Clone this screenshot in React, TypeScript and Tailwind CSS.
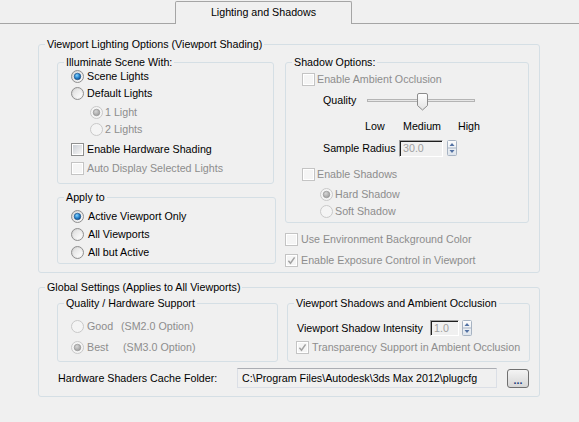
import type { ReactNode } from 'react';
import clsx from 'clsx';

const dim = 'text-[#8d8d8d]';

function Defs() {
  return (
    <svg width="0" height="0" className="absolute">
      <defs>
        <linearGradient id="rb-face" x1="0" y1="0" x2="1" y2="1">
          <stop offset="0" stopColor="#cfcfcf" />
          <stop offset="1" stopColor="#fbfbfb" />
        </linearGradient>
        <linearGradient id="rb-well" x1="0" y1="0" x2="1" y2="1">
          <stop offset="0" stopColor="#dedede" />
          <stop offset="1" stopColor="#ffffff" />
        </linearGradient>
        <radialGradient id="rb-dot" cx="0.4" cy="0.35" r="0.7">
          <stop offset="0" stopColor="#8ad6ff" />
          <stop offset="0.5" stopColor="#2d8ad2" />
          <stop offset="1" stopColor="#0d4682" />
        </radialGradient>
        <radialGradient id="rb-dot-off" cx="0.4" cy="0.35" r="0.7">
          <stop offset="0" stopColor="#d6d6d6" />
          <stop offset="1" stopColor="#999999" />
        </radialGradient>
        <linearGradient id="cb-well" x1="0" y1="0" x2="1" y2="1">
          <stop offset="0" stopColor="#cbcfd5" />
          <stop offset="1" stopColor="#f7f7f7" />
        </linearGradient>
        <linearGradient id="spin" x1="0" y1="0" x2="0" y2="1">
          <stop offset="0" stopColor="#fdfdfd" />
          <stop offset="1" stopColor="#dde4ec" />
        </linearGradient>
        <linearGradient id="thumb" x1="0" y1="0" x2="0" y2="1">
          <stop offset="0" stopColor="#ffffff" />
          <stop offset="1" stopColor="#e2e2e2" />
        </linearGradient>
      </defs>
    </svg>
  );
}

function Radio({ checked = false, disabled = false }: { checked?: boolean; disabled?: boolean }) {
  return (
    <svg width="13" height="13" viewBox="0 0 13 13" className="shrink-0">
      <circle cx="6.5" cy="6.5" r="6" fill={disabled ? '#f4f4f4' : 'url(#rb-face)'} stroke={disabled ? '#c8c8c8' : '#8f8f8f'} />
      {!disabled && <circle cx="6.5" cy="6.5" r="4.4" fill="url(#rb-well)" />}
      {checked && (
        <circle
          cx="6.5"
          cy="6.5"
          r="3.3"
          fill={disabled ? 'url(#rb-dot-off)' : 'url(#rb-dot)'}
          stroke={disabled ? '#8f8f8f' : '#174a80'}
          strokeWidth="0.6"
        />
      )}
    </svg>
  );
}

function Check({ checked = false, disabled = false }: { checked?: boolean; disabled?: boolean }) {
  return (
    <svg width="13" height="13" viewBox="0 0 13 13" className="shrink-0">
      <rect x="0.5" y="0.5" width="12" height="12" fill="#fff" stroke={disabled ? '#c4c4c4' : '#8e8f8f'} />
      <rect x="2" y="2" width="9" height="9" fill={disabled ? '#f5f5f5' : 'url(#cb-well)'} />
      {checked && <path d="M3.4 6.8 L5.5 9.2 L9.6 3.4" fill="none" stroke="#a2a2a2" strokeWidth="1.5" />}
    </svg>
  );
}

function Spinner() {
  return (
    <svg width="10" height="16" viewBox="0 0 10 16" className="shrink-0">
      <rect x="0.5" y="0.5" width="9" height="15" rx="1" fill="url(#spin)" stroke="#a7b3c2" />
      <line x1="1" y1="8" x2="9" y2="8" stroke="#a7b3c2" />
      <path d="M2.5 6 L5 3 L7.5 6 Z" fill="#5372a3" />
      <path d="M2.5 10 L5 13 L7.5 10 Z" fill="#5372a3" />
    </svg>
  );
}

function Group({
  title,
  className,
  children,
}: {
  title: string;
  className?: string;
  children: ReactNode;
}) {
  return (
    <div className={clsx('relative border border-[#d5dfe5] rounded-[3px]', className)}>
      <span className="absolute left-[6px] top-[-8px] px-[2px] bg-[#f0f0f0] leading-[14px] whitespace-nowrap">
        {title}
      </span>
      {children}
    </div>
  );
}

function Row({ className, children }: { className?: string; children: ReactNode }) {
  return <div className={clsx('flex items-center h-[17px] whitespace-nowrap', className)}>{children}</div>;
}

export default function App() {
  return (
    <div className="w-[579px] h-[422px] overflow-hidden bg-[#f0f0f0] font-['Liberation_Sans',Arial,sans-serif] text-[10.7px] leading-[17px] text-black">
      <Defs />

      <div className="flex h-[24px]">
        <div className="w-[175px] border-b border-[#a5a5a5]" />
        <div className="w-[177px] mt-[1px] border border-b-0 border-[#a5a5a5] rounded-t-[2px] flex items-center justify-center pb-[1px]">
          Lighting and Shadows
        </div>
        <div className="flex-1 border-b border-[#a5a5a5]" />
      </div>

      <Group title="Viewport Lighting Options (Viewport Shading)" className="ml-[38px] mt-[20px] w-[502px] h-[229px] flex">
        <div className="w-[237px] pl-[18px] pt-[17px]">
          <Group title="Illuminate Scene With:" className="w-[217px] h-[122px] pl-[13px] pt-[5px]">
            <Row>
              <Radio checked />
              <span className="ml-[3px]">Scene Lights</span>
            </Row>
            <Row>
              <Radio />
              <span className="ml-[3px]">Default Lights</span>
            </Row>
            <Row className="mt-[2px] pl-[19px]">
              <Radio checked disabled />
              <span className={clsx('ml-[2px]', dim)}>1 Light</span>
            </Row>
            <Row className="pl-[19px]">
              <Radio disabled />
              <span className={clsx('ml-[2px]', dim)}>2 Lights</span>
            </Row>
            <Row className="mt-[3px]">
              <Check />
              <span className="ml-[3px]">Enable Hardware Shading</span>
            </Row>
            <Row className="mt-[2px]">
              <Check disabled />
              <span className={clsx('ml-[3px]', dim)}>Auto Display Selected Lights</span>
            </Row>
          </Group>

          <Group title="Apply to" className="mt-[13px] w-[219px] h-[67px] pl-[13px] pt-[10px]">
            <Row>
              <Radio checked />
              <span className="ml-[4px]">Active Viewport Only</span>
            </Row>
            <Row className="mt-[1px]">
              <Radio />
              <span className="ml-[4px]">All Viewports</span>
            </Row>
            <Row className="mt-[1px]">
              <Radio />
              <span className="ml-[4px]">All but Active</span>
            </Row>
          </Group>
        </div>

        <div className="ml-[9px] pt-[17px]">
          <Group title="Shadow Options:" className="w-[244px] h-[161px] pl-[16px] pt-[8px]">
            <Row>
              <Check disabled />
              <span className={clsx('ml-[2px]', dim)}>Enable Ambient Occlusion</span>
            </Row>
            <div className="mt-[2px] h-[20px] pl-[21px] flex items-center">
              <span className="w-[44px]">Quality</span>
              <div className="relative w-[108px] h-[20px] flex items-center">
                <div className="w-full h-[3px] bg-[#e7e7e7] border border-[#b4b4b4]" />
                <svg width="11" height="18" viewBox="0 0 11 18" className="absolute left-[50px] top-[3px]">
                  <path
                    d="M0.5 2 Q0.5 0.5 2 0.5 H9 Q10.5 0.5 10.5 2 V12.5 L5.5 17 L0.5 12.5 Z"
                    fill="url(#thumb)"
                    stroke="#8c8c8c"
                  />
                </svg>
              </div>
            </div>
            <Row className="mt-[8px] pl-[63px]">
              <span className="w-[38px]">Low</span>
              <span className="w-[55px]">Medium</span>
              <span>High</span>
            </Row>
            <div className="mt-[4px] h-[18px] pl-[21px] flex items-center whitespace-nowrap">
              <span className="w-[76px]">Sample Radius</span>
              <div className="w-[44px] h-[17px] border border-t-[#a0a0a0] border-l-[#a0a0a0] border-r-white border-b-white shadow-[inset_1px_1px_0_#1e1e1e] pl-[3px] leading-[15px] text-[#a0a0a0]">
                30.0
              </div>
              <div className="ml-[4px]">
                <Spinner />
              </div>
            </div>
            <Row className="mt-[9px]">
              <Check disabled />
              <span className={clsx('ml-[2px]', dim)}>Enable Shadows</span>
            </Row>
            <Row className="mt-[3px] pl-[18px]">
              <Radio checked disabled />
              <span className={clsx('ml-[2px]', dim)}>Hard Shadow</span>
            </Row>
            <Row className="pl-[18px]">
              <Radio disabled />
              <span className={clsx('ml-[2px]', dim)}>Soft Shadow</span>
            </Row>
          </Group>
          <Row className="mt-[8px]">
            <Check disabled />
            <span className={clsx('ml-[3px]', dim)}>Use Environment Background Color</span>
          </Row>
          <Row className="mt-[4px]">
            <Check checked disabled />
            <span className={clsx('ml-[3px]', dim)}>Enable Exposure Control in Viewport</span>
          </Row>
        </div>
      </Group>

      <Group title="Global Settings (Applies to All Viewports)" className="ml-[38px] mt-[14px] w-[502px] h-[110px]">
        <div className="flex pl-[18px] pt-[15px]">
          <Group title="Quality / Hardware Support" className="w-[221px] h-[59px] pl-[13px] pt-[14px]">
            <Row>
              <Radio disabled />
              <span className={clsx('ml-[3px] w-[34px]', dim)}>Good</span>
              <span className={dim}>(SM2.0 Option)</span>
            </Row>
            <Row className="mt-[4px]">
              <Radio checked disabled />
              <span className={clsx('ml-[3px] w-[36px]', dim)}>Best</span>
              <span className={dim}>(SM3.0 Option)</span>
            </Row>
          </Group>
          <Group title="Viewport Shadows and Ambient Occlusion" className="ml-[9px] w-[243px] h-[59px] pl-[9px] pt-[16px]">
            <div className="flex items-center h-[16px] whitespace-nowrap">
              <span className="w-[133px]">Viewport Shadow Intensity</span>
              <div className="w-[29px] h-[16px] border border-t-[#a0a0a0] border-l-[#a0a0a0] border-r-white border-b-white shadow-[inset_1px_1px_0_#1e1e1e] pl-[3px] leading-[14px] text-[#a0a0a0]">
                1.0
              </div>
              <div className="ml-[3px]">
                <Spinner />
              </div>
            </div>
            <Row className="mt-[3px] -ml-[1px]">
              <Check checked disabled />
              <span className={clsx('ml-[3px]', dim)}>Transparency Support in Ambient Occlusion</span>
            </Row>
          </Group>
        </div>
        <div className="mt-[6px] h-[20px] pl-[19px] flex items-center whitespace-nowrap">
          <span className="w-[179px]">Hardware Shaders Cache Folder:</span>
          <div className="w-[260px] h-[20px] border border-[#dbdfe6] border-t-[#abadb3] pl-[4px] leading-[18px]">
            C:\Program Files\Autodesk\3ds Max 2012\plugcfg
          </div>
          <button className="ml-[10px] w-[22px] h-[19px] rounded-[3px] border border-[#707070] bg-linear-to-b from-[#f4f4f4] to-[#d6d6d6] flex items-end justify-center pb-[3px] leading-[8px] text-[#1f3d7a] font-bold">
            ...
          </button>
        </div>
      </Group>
    </div>
  );
}
